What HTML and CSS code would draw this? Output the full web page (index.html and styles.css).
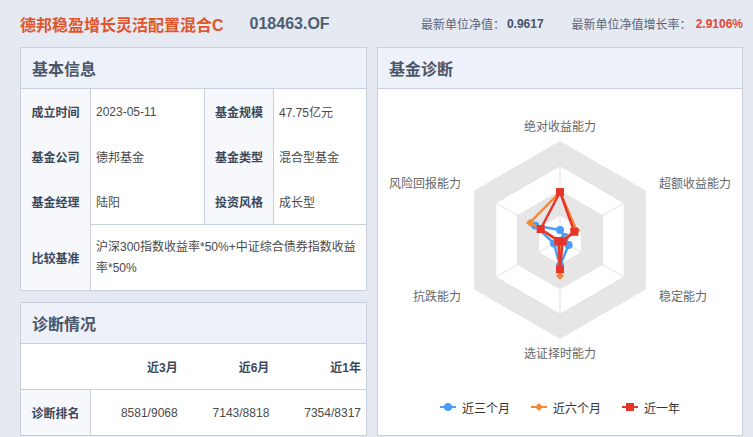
FILE: index.html
```html
<!DOCTYPE html>
<html lang="zh-CN">
<head>
  <meta charset="UTF-8" />
  <title>德邦稳盈增长灵活配置混合C</title>
  <link rel="stylesheet" href="styles.css">
</head>
<body>

  <!-- TOP BAR -->
  <div class="topbar">
    <span class="fund-name">德邦稳盈增长灵活配置混合C</span>
    <span class="fund-code">018463.OF</span>
    <div class="nav-info">
      <span class="nav-label">最新单位净值：</span>
      <span class="nav-value">0.9617</span>
      <span class="nav-label">最新单位净值增长率：</span>
      <span class="nav-value up">2.9106%</span>
    </div>
  </div>

  <div class="main">
    <div class="left-col">

      <!-- BASIC INFO -->
      <div class="panel basic">
        <div class="panel-header">基本信息</div>
        <div class="info-grid">
          <div class="lbl">成立时间</div>
          <div class="val bordered">2023-05-11</div>
          <div class="lbl">基金规模</div>
          <div class="val">47.75亿元</div>

          <div class="lbl">基金公司</div>
          <div class="val bordered">德邦基金</div>
          <div class="lbl">基金类型</div>
          <div class="val">混合型基金</div>

          <div class="lbl">基金经理</div>
          <div class="val bordered">陆阳</div>
          <div class="lbl">投资风格</div>
          <div class="val">成长型</div>

          <div class="lbl tall">比较基准</div>
          <div class="val wide">沪深300指数收益率*50%+中证综合债券指数收益率*50%</div>
        </div>
      </div>

      <!-- RANK -->
      <div class="panel rank">
        <div class="panel-header">诊断情况</div>
        <div class="rank-grid">
          <div class="th"></div>
          <div class="th">近3月</div>
          <div class="th">近6月</div>
          <div class="th">近1年</div>

          <div class="lbl">诊断排名</div>
          <div class="td">8581/9068</div>
          <div class="td">7143/8818</div>
          <div class="td">7354/8317</div>
        </div>
      </div>
    </div>

    <!-- DIAGNOSIS -->
    <div class="panel diag">
      <div class="panel-header">基金诊断</div>
      <div class="chart-body">
        <svg class="radar" width="364" height="300" viewBox="0 0 364 300">
          <!-- split areas -->
          <polygon points="182,52 267.7,101.5 267.7,200.5 182,250 96.3,200.5 96.3,101.5" fill="#e6e6e6"/>
          <polygon points="182,76.75 246.3,113.9 246.3,188.1 182,225.25 117.7,188.1 117.7,113.9" fill="#fff" stroke="#e3e3e3"/>
          <polygon points="182,101.5 224.9,126.25 224.9,175.75 182,200.5 139.1,175.75 139.1,126.25" fill="#e6e6e6"/>
          <polygon points="182,126.25 203.4,138.6 203.4,163.4 182,175.75 160.6,163.4 160.6,138.6" fill="#fff" stroke="#e3e3e3"/>
          <!-- axes -->
          <g stroke="#e3e3e3" stroke-width="1">
            <line x1="182" y1="151" x2="182" y2="52"/>
            <line x1="182" y1="151" x2="267.7" y2="101.5"/>
            <line x1="182" y1="151" x2="267.7" y2="200.5"/>
            <line x1="182" y1="151" x2="182" y2="250"/>
            <line x1="182" y1="151" x2="96.3" y2="200.5"/>
            <line x1="182" y1="151" x2="96.3" y2="101.5"/>
          </g>

          <!-- indicator names -->
          <g class="axis-name">
            <text x="182" y="42" text-anchor="middle">绝对收益能力</text>
            <text x="281" y="99">超额收益能力</text>
            <text x="281" y="212">稳定能力</text>
            <text x="182" y="269" text-anchor="middle">选证择时能力</text>
            <text x="83" y="212" text-anchor="end">抗跌能力</text>
            <text x="83" y="99" text-anchor="end">风险回报能力</text>
          </g>

          <!-- 近三个月 -->
          <polygon points="182,141.1 187.1,148 190.6,156 182,176.7 176,154.5 157.1,136.6" fill="none" stroke="#4a9ef5" stroke-width="2.5" stroke-linejoin="round"/>
          <g fill="#4a9ef5">
            <circle cx="182" cy="141.1" r="4"/>
            <circle cx="187.1" cy="148" r="4"/>
            <circle cx="190.6" cy="156" r="4"/>
            <circle cx="182" cy="176.7" r="4"/>
            <circle cx="176" cy="154.5" r="4"/>
            <circle cx="157.1" cy="136.6" r="4"/>
          </g>

          <!-- 近六个月 -->
          <polygon points="182,103 198.7,141.4 183,151.6 182,187 181,151.6 152,133.7" fill="none" stroke="#f08a3c" stroke-width="2.5" stroke-linejoin="round"/>
          <g fill="#f08a3c">
            <polygon points="182,99 186,103 182,107 178,103"/>
            <polygon points="198.7,137.4 202.7,141.4 198.7,145.4 194.7,141.4"/>
            <polygon points="182,183 186,187 182,191 178,187"/>
            <polygon points="152,129.7 156,133.7 152,137.7 148,133.7"/>
          </g>

          <!-- 近一年 -->
          <polygon points="182,103 196.3,142.8 184.6,152.5 182,180.3 180.3,152 162.7,140" fill="none" stroke="#e8352b" stroke-width="2.5" stroke-linejoin="round"/>
          <g fill="#e8352b">
            <rect x="178" y="99" width="8" height="8"/>
            <rect x="192.3" y="138.8" width="8" height="8"/>
            <rect x="180.6" y="148.5" width="8" height="8"/>
            <rect x="178" y="176.3" width="8" height="8"/>
            <rect x="176.3" y="148" width="8" height="8"/>
            <rect x="158.7" y="136" width="8" height="8"/>
          </g>
        </svg>

        <div class="legend">
          <div class="legend-item">
            <svg width="16" height="10" viewBox="0 0 16 10">
              <line x1="0" y1="5" x2="16" y2="5" stroke="#4a9ef5" stroke-width="2"/>
              <circle cx="8" cy="5" r="4" fill="#4a9ef5"/>
            </svg>
            <span>近三个月</span>
          </div>
          <div class="legend-item">
            <svg width="16" height="10" viewBox="0 0 16 10">
              <line x1="0" y1="5" x2="16" y2="5" stroke="#f08a3c" stroke-width="2"/>
              <polygon points="8,1 12,5 8,9 4,5" fill="#f08a3c"/>
            </svg>
            <span>近六个月</span>
          </div>
          <div class="legend-item">
            <svg width="16" height="10" viewBox="0 0 16 10">
              <line x1="0" y1="5" x2="16" y2="5" stroke="#e8352b" stroke-width="2"/>
              <rect x="4" y="1" width="8" height="8" fill="#e8352b"/>
            </svg>
            <span>近一年</span>
          </div>
        </div>
      </div>
    </div>
  </div>

</body>
</html>
```

FILE: styles.css
```css
* {
  box-sizing: border-box;
}

body {
  margin: 0;
  background-color: #e5e9f1;
  font-family: "Liberation Sans", "Noto Sans CJK SC", sans-serif;
  color: #333;
}

/* Top bar */
.topbar {
  display: flex;
  align-items: center;
  height: 47px;
  padding: 0 10px 0 20px;
}

.fund-name {
  color: #e0552b;
  font-size: 16px;
  font-weight: bold;
}

.fund-code {
  margin-left: 26px;
  color: #4f5e73;
  font-size: 16px;
  font-weight: bold;
}

.nav-info {
  margin-left: auto;
  display: flex;
  align-items: center;
  font-size: 12px;
}

.nav-label {
  color: #5c6678;
}

.nav-value {
  margin-left: 2px;
  margin-right: 28px;
  color: #46536a;
  font-weight: bold;
}

.nav-value.up {
  margin-right: 0;
  margin-left: 4px;
  color: #e0483a;
}

/* Layout */
.main {
  display: flex;
  gap: 10px;
  padding: 0 10px 0 20px;
}

.left-col {
  width: 347px;
  display: flex;
  flex-direction: column;
  gap: 11px;
}

.panel {
  background: #fff;
  border: 1px solid #c9d0dc;
}

.panel-header {
  height: 41px;
  display: flex;
  align-items: center;
  padding-left: 11px;
  background: #edf1f9;
  border-bottom: 1px solid #c9d0dc;
  color: #4b5668;
  font-size: 16px;
  font-weight: bold;
}

/* Basic info table */
.info-grid {
  display: grid;
  grid-template-columns: 70px 114px 69px 1fr;
  grid-template-rows: 45px 45px 45px 66px;
  font-size: 12px;
}

.lbl {
  display: flex;
  align-items: center;
  justify-content: center;
  background: #f6f8fc;
  border-right: 1px solid #c9d0dc;
  color: #3c4859;
  font-weight: bold;
}

.val {
  display: flex;
  align-items: center;
  padding: 0 5px;
  color: #4a4a4a;
}

.val.bordered {
  border-right: 1px solid #c9d0dc;
}

.val.wide {
  grid-column: span 3;
  border-top: 1px solid #c9d0dc;
  line-height: 21px;
}

/* Rank table */
.rank-grid {
  display: grid;
  grid-template-columns: 70px 1fr 1fr 1fr;
  grid-template-rows: 46px 45px;
  font-size: 12px;
}

.th {
  display: flex;
  align-items: center;
  justify-content: flex-end;
  padding-right: 5px;
  border-bottom: 1px solid #c9d0dc;
  color: #3c4859;
  font-weight: bold;
}

.td {
  display: flex;
  align-items: center;
  justify-content: flex-end;
  padding-right: 5px;
  color: #4a4a4a;
}

/* Diagnosis chart */
.diag {
  flex: 1;
  display: flex;
  flex-direction: column;
}

.chart-body {
  flex: 1;
  display: flex;
  flex-direction: column;
}

.radar {
  display: block;
}

.axis-name text {
  font-size: 12px;
  fill: #666;
}

.legend {
  height: 36px;
  display: flex;
  align-items: center;
  justify-content: center;
  gap: 21px;
  font-size: 12px;
  color: #333;
}

.legend-item {
  display: flex;
  align-items: center;
  gap: 6px;
}

.legend-item svg {
  display: block;
}
```
